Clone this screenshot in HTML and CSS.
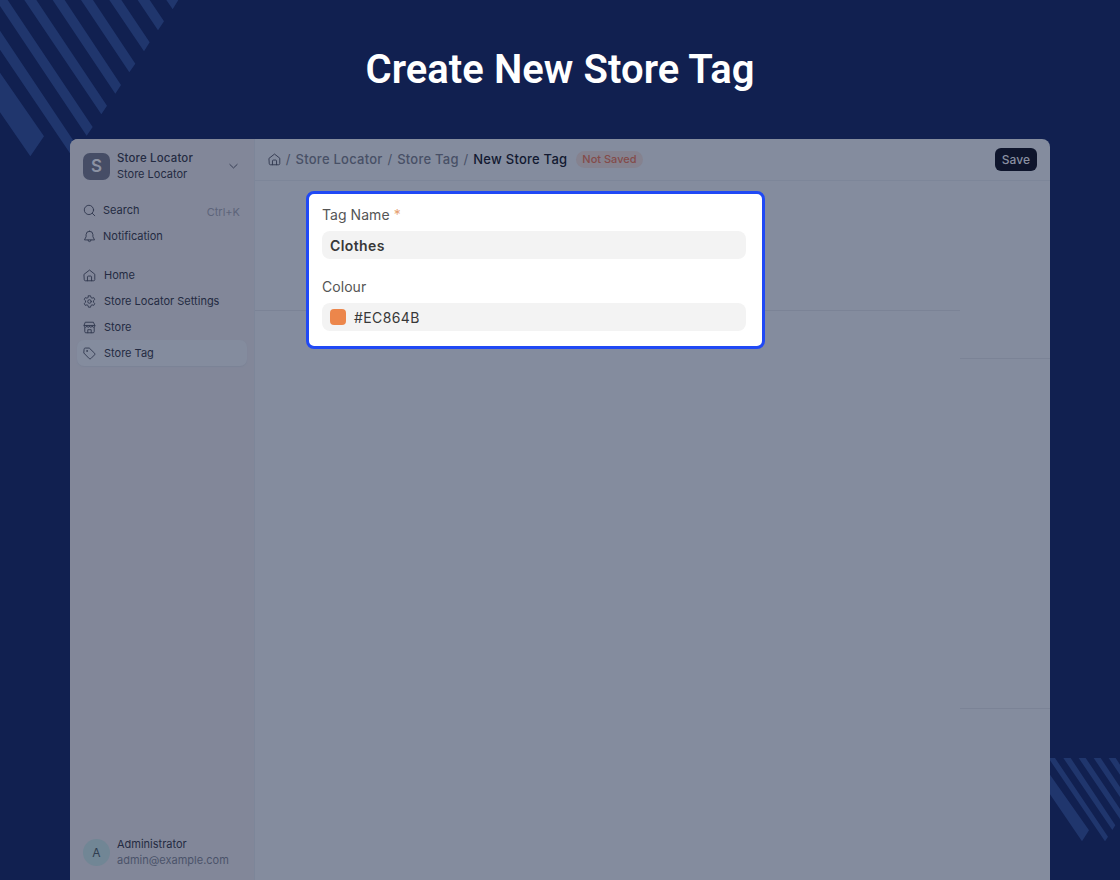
FILE: index.html
```html
<!DOCTYPE html>
<html lang="en">
<head>
    <meta charset="UTF-8">
    <meta name="viewport" content="width=device-width, initial-scale=1.0">
    <title>Create New Store Tag</title>
    <link rel="stylesheet" href="styles.css">
</head>
<body>

    <!-- Background stripes -->
    <svg class="stripes stripes-top" width="200" height="170" viewBox="0 0 600 510">
        <path d="M499 0H535L518 28ZM413 0H449L492 64L474 91ZM328 0H364L449 127L432 154ZM243 0H279L406 191L388 217ZM158 0H194L363 255L346 281ZM73 0H109L321 317L304 343ZM-12 0H23L278 381L260 407ZM0 92L235 444L217 470L0 149ZM0 218L132 409L91 469L0 337Z"/>
    </svg>
    <svg class="stripes stripes-bottom" width="70" height="90" viewBox="90 54 210 270">
        <path d="M90 104L207 271L186 304L90 163ZM90 54H105L264 290L255 304L90 61ZM130 54H152L286 256L277 270ZM176 54H197L300 207V237ZM221 54H242L300 141V171ZM266 54H287L300 74V104Z"/>
    </svg>

    <h1>Create New Store Tag</h1>

    <div class="window">
        <!-- Sidebar -->
        <aside class="sidebar">
            <div class="app-header">
                <div class="app-logo">S</div>
                <div class="two-lines">
                    <div class="app-title">Store Locator</div>
                    <div class="app-subtitle">Store Locator</div>
                </div>
                <svg class="icon chevron" viewBox="0 0 16 16"><path d="M3.5 5.5 8 9.8 12.5 5.5"/></svg>
            </div>

            <nav class="menu menu-top">
                <a class="menu-item">
                    <svg class="icon" viewBox="0 0 16 16"><circle cx="7.3" cy="7.3" r="5.7"/><path d="m11.5 11.5 3 3"/></svg>
                    <span>Search</span>
                    <span class="shortcut">Ctrl+K</span>
                </a>
                <a class="menu-item">
                    <svg class="icon" viewBox="0 0 16 16"><path d="M8 1.5a4.2 4.2 0 0 0-4.2 4.2v2.6L1.8 12.2h12.4l-2-3.9V5.7A4.2 4.2 0 0 0 8 1.5ZM6.2 12.5a1.8 1.8 0 0 0 3.6 0"/></svg>
                    <span>Notification</span>
                </a>
            </nav>

            <nav class="menu menu-main">
                <a class="menu-item">
                    <svg class="icon" viewBox="0 0 16 16"><path d="M1.5 6.4 8 1.3l6.5 5.1v6.6c0 1-.6 1.5-1.5 1.5H3c-.9 0-1.5-.5-1.5-1.5ZM5.5 14.5v-4.7c0-.7.4-1.1 1.1-1.1h2.8c.7 0 1.1.4 1.1 1.1v4.7"/></svg>
                    <span>Home</span>
                </a>
                <a class="menu-item">
                    <svg class="icon" viewBox="0 0 16 16"><path d="M6.7 1h2.6l.5 2.1 1.3.8 2.1-.7 1.3 2.3L12.9 7v2l1.6 1.5-1.3 2.3-2.1-.7-1.3.8-.5 2.1H6.7l-.5-2.1-1.3-.8-2.1.7-1.3-2.3L3.1 9V7L1.5 5.500l1.300-2.300 2.100.7 1.300-.8Z"/><circle cx="8" cy="8" r="2.2"/></svg>
                    <span>Store Locator Settings</span>
                </a>
                <a class="menu-item">
                    <svg class="icon" viewBox="0 0 16 16"><path d="M3.2 1.5h9.6l1.9 4.3c0 2.5-3.2 2.5-3.4.2-.2 2.3-3.3 2.3-3.3 0 0 2.3-3.1 2.3-3.3 0-.2 2.3-3.4 2.3-3.4-.2ZM2.2 8v5.2c0 .8.5 1.3 1.3 1.3h9c.8 0 1.3-.5 1.3-1.3V8M5.9 14.5v-3.8h4.2v3.8M1.5 5.5h13"/></svg>
                    <span>Store</span>
                </a>
                <a class="menu-item active">
                    <svg class="icon" viewBox="0 0 16 16"><path d="M1.3 2.7c0-.8.6-1.4 1.4-1.4h5l6.6 6.4c.6.6.6 1.3 0 1.9l-4.7 4.7c-.6.6-1.3.6-1.9 0L1.3 7.7Z"/><circle cx="4.9" cy="4.9" r=".5"/></svg>
                    <span>Store Tag</span>
                </a>
            </nav>

            <div class="user">
                <div class="avatar">A</div>
                <div class="two-lines">
                    <div class="user-name">Administrator</div>
                    <div class="user-email">admin@example.com</div>
                </div>
            </div>
        </aside>

        <!-- Page -->
        <main class="main">
            <header class="page-head">
                <svg class="icon" viewBox="0 0 16 16"><path d="M1.5 6.4 8 1.3l6.5 5.1v6.6c0 1-.6 1.5-1.5 1.5H3c-.9 0-1.5-.5-1.5-1.5ZM5.5 14.5v-4.7c0-.7.4-1.1 1.1-1.1h2.8c.7 0 1.1.4 1.1 1.1v4.7"/></svg>
                <span class="slash">/</span>
                <span class="crumb">Store Locator</span>
                <span class="slash">/</span>
                <span class="crumb">Store Tag</span>
                <span class="slash">/</span>
                <span class="crumb current">New Store Tag</span>
                <span class="badge">Not Saved</span>
                <button class="save">Save</button>
            </header>
            <div class="page-body">
                <div class="form-column">
                    <form class="form-card">
                        <label>Tag Name <span class="required">*</span></label>
                        <div class="field name-field">Clothes</div>
                        <label>Colour</label>
                        <div class="field"><span class="swatch"></span>#EC864B</div>
                    </form>
                </div>
                <div class="side-column">
                    <div class="side-section"></div>
                </div>
            </div>
        </main>
    </div>

</body>
</html>
```
FILE: styles.css
```css
* {
    box-sizing: border-box;
}
body {
    margin: 0;
    height: 880px;
    overflow: hidden;
    background: #112050;
    font-family: Inter, sans-serif;
    display: flex;
    flex-direction: column;
}
.stripes {
    position: absolute;
    fill: #20366d;
}
.stripes-top {
    top: 0;
    left: 0;
}
.stripes-bottom {
    right: 0;
    top: 758px;
}
h1 {
    margin: 0;
    height: 139px;
    line-height: 139px;
    text-align: center;
    color: #fff;
    font-family: Roboto, sans-serif;
    font-size: 40px;
    font-weight: 600;
    letter-spacing: 0.06px;
}
.window {
    position: relative;
    display: flex;
    flex: 1;
    margin: 0 70px;
    background: #848c9e;
    border-radius: 8px 8px 0 0;
    overflow: hidden;
}
.icon {
    width: 13px;
    height: 13px;
    flex: none;
    fill: none;
    stroke: #323a50;
    stroke-width: 1.15;
    stroke-linejoin: round;
    stroke-linecap: round;
}

/* Sidebar */
.sidebar {
    width: 185px;
    display: flex;
    flex-direction: column;
    background: #828799;
    border-right: 1px solid #7d8699;
    padding: 0 7px;
    font-size: 11px;
    font-weight: 420;
    color: #242b42;
}
.app-header, .user {
    display: flex;
    align-items: center;
    gap: 7px;
    padding: 0 6px;
}
.app-header {
    margin-top: 11px;
    height: 32px;
}
.app-logo {
    width: 27px;
    height: 27px;
    border-radius: 7px;
    background: #464d66;
    color: #8c92a3;
    font-size: 17px;
    font-weight: 600;
    line-height: 27px;
    text-align: center;
}
.two-lines {
    line-height: 16px;
}
.app-title {
    font-weight: 500;
    font-size: 11.4px;
    letter-spacing: 0.2px;
}
.chevron {
    margin-left: auto;
    margin-right: 1px;
}
.menu {
    display: flex;
    flex-direction: column;
}
.menu-top {
    margin-top: 15px;
}
.menu-top .menu-item {
    gap: 7px;
}
.menu-main {
    margin-top: 13px;
}
.menu-item {
    display: flex;
    align-items: center;
    gap: 8px;
    height: 26px;
    padding: 0 6px;
    border-radius: 7px;
}
.active {
    background: #848c9e;
    box-shadow: 0 1px 1px #7b8396;
}
.shortcut {
    margin: 3px 1px 0 auto;
    color: #5d647a;
}
.user {
    margin-top: auto;
    margin-bottom: 12px;
}
.avatar {
    width: 27px;
    height: 27px;
    border-radius: 50%;
    background: #718695;
    color: #303d50;
    font-size: 12px;
    line-height: 27px;
    text-align: center;
}
.user-email {
    color: #4b536a;
}

/* Page */
.main {
    flex: 1;
    display: flex;
    flex-direction: column;
}
.page-head {
    height: 42px;
    display: flex;
    align-items: center;
    padding: 0 13px 1px;
    border-bottom: 1px solid #7d8699;
    font-size: 13px;
    font-weight: 500;
    letter-spacing: 0.24px;
    color: #485066;
}
.slash {
    width: 14.6px;
    text-align: center;
    font-weight: 400;
}
.current {
    color: #121931;
}
.badge {
    margin-left: 9px;
    padding: 0 6px;
    height: 17px;
    line-height: 17px;
    border-radius: 9px;
    background: #85828f;
    color: #834b4a;
    font-size: 11px;
    letter-spacing: 0;
}
.save {
    margin-left: auto;
    width: 42px;
    height: 23px;
    padding: 0;
    border: none;
    border-radius: 6px;
    background: #0e152c;
    color: #8990a1;
    font: 500 12px Inter, sans-serif;
    letter-spacing: 0.1px;
}
.page-body {
    flex: 1;
    display: flex;
}
.form-column {
    width: 705px;
    height: 130px;
    padding: 10px 0 0 51px;
    border-bottom: 1px solid #7b8396;
}
.form-card {
    position: relative;
    width: 459px;
    height: 158px;
    padding: 13px 16px 0 13px;
    background: #fff;
    border: 3px solid #2049f5;
    border-radius: 8px;
    font-size: 14px;
    letter-spacing: 0.4px;
    color: #383838;
}
label {
    display: block;
    height: 24px;
    line-height: 16px;
    letter-spacing: 0.05px;
    color: #555;
}
.required {
    color: #e6a071;
}
.field {
    display: flex;
    align-items: center;
    gap: 8px;
    height: 28px;
    padding: 0 8px;
    border-radius: 8px;
    background: #f3f3f3;
}
.name-field {
    margin-bottom: 20px;
    font-weight: 600;
}
.swatch {
    width: 16px;
    height: 16px;
    border-radius: 4px;
    background: #ec864b;
}
.side-column {
    flex: 1;
    padding-top: 177px;
}
.side-section {
    height: 351px;
    border-top: 1px solid #7b8396;
    border-bottom: 1px solid #7b8396;
}
```
